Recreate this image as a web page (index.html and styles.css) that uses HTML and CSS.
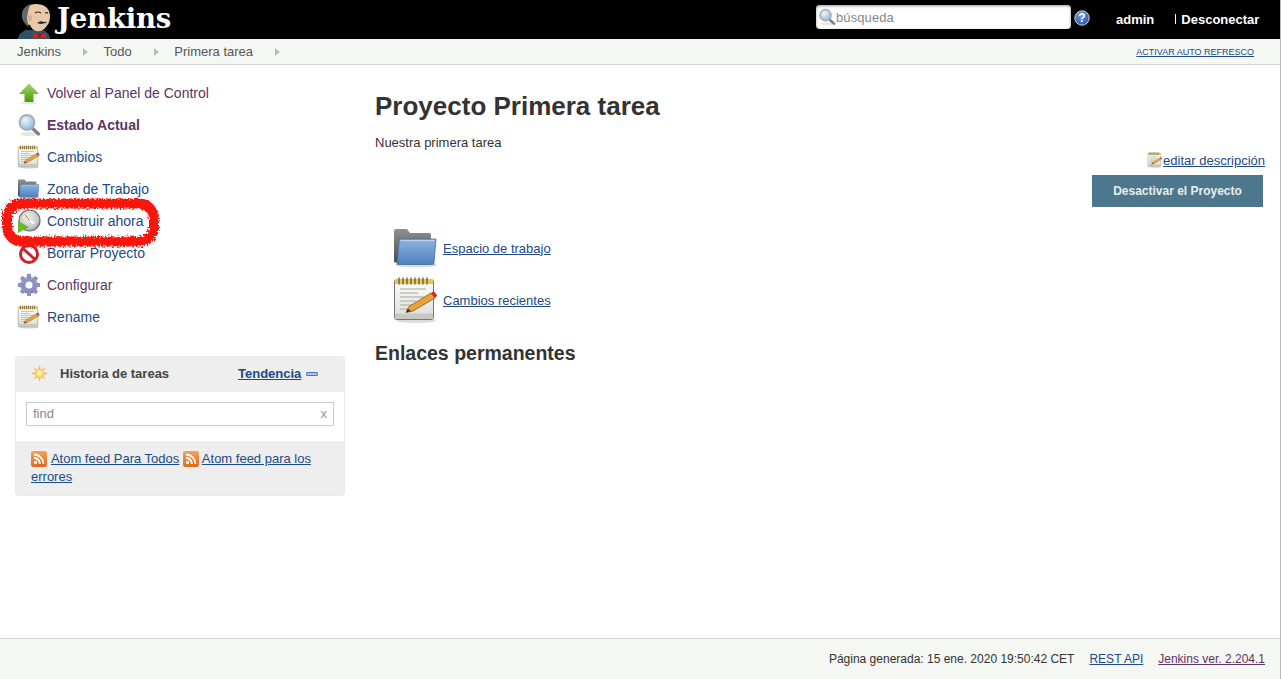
FILE: index.html
```html
<!DOCTYPE html>
<html lang="es">
<head>
<meta charset="utf-8">
<title>Primera tarea [Jenkins]</title>
<link rel="stylesheet" href="styles.css">
</head>
<body>
<svg class="defs" width="0" height="0" aria-hidden="true">
  <defs>
    <linearGradient id="gFolder" x1="0" y1="0" x2="0" y2="1"><stop offset="0" stop-color="#8fb4e0"/><stop offset="1" stop-color="#4f7fbe"/></linearGradient>
    <linearGradient id="gTab" x1="0" y1="0" x2="0" y2="1"><stop offset="0" stop-color="#909090"/><stop offset="1" stop-color="#4a4a4a"/></linearGradient>
    <linearGradient id="gPaper" x1="0" y1="0" x2="0" y2="1"><stop offset="0" stop-color="#fdfdfb"/><stop offset="1" stop-color="#dcdcd8"/></linearGradient>
    <linearGradient id="gArrow" x1="0" y1="0" x2="0" y2="1"><stop offset="0" stop-color="#a5d96a"/><stop offset="1" stop-color="#4e9a06"/></linearGradient>
    <linearGradient id="gGear" x1="0" y1="0" x2="0" y2="1"><stop offset="0" stop-color="#b4bade"/><stop offset="1" stop-color="#767eb0"/></linearGradient>
    <radialGradient id="gLens" cx=".4" cy=".35" r=".7"><stop offset="0" stop-color="#eef5fc"/><stop offset="1" stop-color="#8fb2d8"/></radialGradient>
    <radialGradient id="gHelp" cx=".4" cy=".3" r=".8"><stop offset="0" stop-color="#6f9fe0"/><stop offset="1" stop-color="#1f4f9a"/></radialGradient>
    <linearGradient id="gRss" x1="0" y1="0" x2="0" y2="1"><stop offset="0" stop-color="#f8a05a"/><stop offset="1" stop-color="#dd6a1a"/></linearGradient>
    <radialGradient id="gSun" cx=".5" cy=".45" r=".55"><stop offset="0" stop-color="#fff7c0"/><stop offset="1" stop-color="#f7cf55"/></radialGradient>
    <radialGradient id="gClock" cx=".45" cy=".4" r=".65"><stop offset="0" stop-color="#ecedef"/><stop offset=".7" stop-color="#c6c8cc"/><stop offset="1" stop-color="#85878c"/></radialGradient>
    <filter id="rough" x="-8%" y="-25%" width="116%" height="150%"><feTurbulence type="fractalNoise" baseFrequency=".55" numOctaves="2" seed="7"/><feDisplacementMap in="SourceGraphic" scale="7"/></filter>
    <symbol id="i-folder" viewBox="0 0 48 48">
      <ellipse cx="24" cy="41" rx="21" ry="2.500" fill="#000" opacity=".14"/>
      <path d="M2 7a2 2 0 0 1 2-2h11l3 4h19a2 2 0 0 1 2 2v6H7l-1 22-4-1z" fill="url(#gTab)"/>
      <path d="M7.500 15H44l-2 24a1.500 1.500 0 0 1-1.500 1.500H6a1 1 0 0 1-1-1z" fill="url(#gFolder)" stroke="#3f6cab" stroke-width=".8"/>
      <path d="M8.500 16.500H42.500" stroke="#bcd3ef" stroke-width="1"/>
    </symbol>
    <symbol id="i-note" viewBox="0 0 48 48">
      <ellipse cx="24" cy="44.500" rx="20" ry="2.500" fill="#000" opacity=".14"/>
      <rect x="2.500" y="3.500" width="39" height="40" rx="2" fill="url(#gPaper)" stroke="#77776f"/>
      <rect x="3" y="37.500" width="38" height="5.500" fill="#c8c8c4"/>
      <rect x="3" y="3" width="38" height="5" fill="#e7c65a"/>
      <path d="M7 2v6M11 2v6M15 2v6M19 2v6M23 2v6M27 2v6M31 2v6M35 2v6" stroke="#77622a" stroke-width="1.400" stroke-linecap="round"/>
      <path d="M8 13h26M8 17h18M8 21h24M8 25h16M8 29h14M8 33h12" stroke="#a8a8a0" stroke-width="1.200"/>
      <path d="M14 36.500l3-6L39 17l4 5-22 13z" fill="#e5a33c" stroke="#8a5a14" stroke-width=".8"/>
      <path d="M14 36.500l1.800-3.700 3 2.300z" fill="#3a2a14"/>
      <path d="M39 17l3-1.800 3.200 4.300-2.200 2.500z" fill="#d9232a"/>
    </symbol>
    <symbol id="i-search" viewBox="0 0 24 24">
      <ellipse cx="12" cy="21" rx="9" ry="2" fill="#000" opacity=".1"/>
      <path d="M15 15l6.500 6" stroke="#7c8088" stroke-width="3.200" stroke-linecap="round"/>
      <circle cx="10" cy="9.500" r="7.500" fill="url(#gLens)" stroke="#a8acb0" stroke-width="1.800"/>
    </symbol>
  </defs>
</svg>

<div class="page">
  <header class="topbar">
    <a class="brand">
      <svg class="butler" viewBox="0 0 35 39" aria-hidden="true">
        <path d="M0 39c0-4 3-7 8-9h17c4 2 7 5 7 9z" fill="#2f5066"/>
        <path d="M8 12c0-5 4-8 10-8 8 0 14 4 14 12 0 4-1 8-4 11-2 3-6 5-10 4-3-1-5-3-6-6-3 0-4-3-4-5z" fill="#e9c8aa"/>
        <path d="M11 27C6 24 3 19 4 13 5 8 9 5 13 4c-2 3-3 6-3 8l-1 5c0 4 1 7 2 10z" fill="#62666a"/>
        <ellipse cx="12" cy="18" rx="2" ry="3" fill="#d8ae90"/>
        <path d="M17 13q3-2 6 0M27 13q2-1 3 .5" stroke="#3a2a20" stroke-width="1.100" fill="none"/>
        <path d="M19 23q4-3 6-1 2-1 4 1-4 0-5 1-3 0-5-1z" fill="#2e2a28"/>
        <path d="M15 33l6.500 2 6.500-2v6l-6.500-2-6.500 2z" fill="#d42027"/>
        <rect x="20" y="34" width="3" height="3" fill="#a01418"/>
      </svg>
      <span class="wordmark">Jenkins</span>
    </a>
    <div class="search">
      <svg class="search-icon"><use href="#i-search"/></svg>
      <span class="search-ph">búsqueda</span>
    </div>
    <svg class="help" viewBox="0 0 16 16" aria-hidden="true">
      <circle cx="8" cy="8" r="7.200" fill="url(#gHelp)" stroke="#dfe8f5" stroke-width=".9"/>
      <text x="8" y="12" text-anchor="middle" class="help-q">?</text>
    </svg>
    <span class="user">admin</span>
    <span class="logout">Desconectar</span>
  </header>

  <nav class="crumbs">
    <span>Jenkins</span><i class="tri"></i>
    <span>Todo</span><i class="tri"></i>
    <span>Primera tarea</span><i class="tri"></i>
    <a class="refresh">ACTIVAR AUTO REFRESCO</a>
  </nav>

  <div class="content">
    <aside class="side">
      <ul class="tasks">
        <li class="visited">
          <svg class="ti" viewBox="0 0 24 24"><ellipse cx="12" cy="22" rx="8" ry="1.500" fill="#000" opacity=".1"/><path d="M12 2.500L22 13h-5.500v8h-9v-8H2z" fill="url(#gArrow)"/></svg>
          Volver al Panel de Control
        </li>
        <li class="visited current">
          <svg class="ti"><use href="#i-search"/></svg>
          Estado Actual
        </li>
        <li>
          <svg class="ti"><use href="#i-note"/></svg>
          Cambios
        </li>
        <li>
          <svg class="ti"><use href="#i-folder"/></svg>
          Zona de Trabajo
        </li>
        <li>
          <svg class="ti" viewBox="0 0 24 24">
            <circle cx="12.500" cy="11.500" r="10.500" fill="url(#gClock)" stroke="#6f7176" stroke-width="1.200"/>
            <path d="M12.500 11.500V3.500A8 8 0 0 0 5 8.500z" fill="#f3e6ae"/>
            <path d="M12.500 11.500L8 5.500M12.500 11.500l5 3" stroke="#fff" stroke-width="1.600"/>
            <path d="M12.500 11.500L8 5.500" stroke="#444" stroke-width=".7"/>
            <path d="M1 12l11 6-11 6z" fill="#66bb22"/>
          </svg>
          Construir ahora
        </li>
        <li>
          <svg class="ti" viewBox="0 0 24 24"><circle cx="12" cy="13" r="8.500" fill="#fff" stroke="#c8242a" stroke-width="3"/><path d="M6 7.500l12 11" stroke="#c8242a" stroke-width="3"/></svg>
          Borrar Proyecto
        </li>
        <li class="visited">
          <svg class="ti" viewBox="0 0 24 24"><circle cx="12" cy="12" r="8.800" fill="url(#gGear)"/><path d="M12 1v22M1 12h22M4.200 4.200l15.600 15.600M19.800 4.200L4.200 19.800" stroke="#8b92c2" stroke-width="4"/><circle cx="12" cy="12" r="3.600" fill="#fff"/></svg>
          Configurar
        </li>
        <li>
          <svg class="ti"><use href="#i-note"/></svg>
          Rename
        </li>
      </ul>

      <section class="widget">
        <div class="w-head">
          <svg class="sun" viewBox="0 0 16 16"><path d="M8 0v16M0 8h16M2.300 2.300l11.400 11.400M13.700 2.300L2.300 13.700" stroke="#f5b860" stroke-width="1.400"/><circle cx="8" cy="8" r="4.800" fill="url(#gSun)" stroke="#eeb04a" stroke-width=".6"/></svg>
          <span class="w-title">Historia de tareas</span>
          <a class="w-trend">Tendencia</a>
          <span class="w-min"></span>
        </div>
        <div class="w-body">
          <div class="find"><span>find</span><span class="find-x">x</span></div>
        </div>
        <div class="w-foot">
          <svg class="rss rss-first" viewBox="0 0 16 16"><rect width="16" height="16" rx="2.500" fill="url(#gRss)"/><circle cx="4.500" cy="11.500" r="1.700" fill="#fff"/><path d="M3 7a6 6 0 0 1 6 6M3 3.500A9.500 9.500 0 0 1 12.500 13" stroke="#fff" stroke-width="1.800" fill="none"/></svg>
          <a>Atom feed Para Todos</a>
          <svg class="rss" viewBox="0 0 16 16"><rect width="16" height="16" rx="2.500" fill="url(#gRss)"/><circle cx="4.500" cy="11.500" r="1.700" fill="#fff"/><path d="M3 7a6 6 0 0 1 6 6M3 3.500A9.500 9.500 0 0 1 12.500 13" stroke="#fff" stroke-width="1.800" fill="none"/></svg>
          <a>Atom feed para los errores</a>
        </div>
      </section>

      <svg class="scribble" viewBox="0 0 160 56" aria-hidden="true">
        <rect x="7" y="5.500" width="147" height="38" rx="15" fill="none" stroke="#f8120c" stroke-width="10" filter="url(#rough)"/>
      </svg>
    </aside>

    <main class="main">
      <h1>Proyecto Primera tarea</h1>
      <p class="desc">Nuestra primera tarea</p>
      <div class="edit">
        <svg class="edit-i"><use href="#i-note"/></svg><a>editar descripción</a>
      </div>
      <div class="actions"><button class="disable">Desactivar el Proyecto</button></div>
      <div class="links">
        <div class="link-row"><svg class="li"><use href="#i-folder"/></svg><a>Espacio de trabajo</a></div>
        <div class="link-row"><svg class="li"><use href="#i-note"/></svg><a>Cambios recientes</a></div>
      </div>
      <h2>Enlaces permanentes</h2>
    </main>
  </div>

  <footer class="foot">
    <span>Página generada: 15 ene. 2020 19:50:42 CET</span>
    <a>REST API</a>
    <a class="ver">Jenkins ver. 2.204.1</a>
  </footer>
</div>
</body>
</html>
```

FILE: styles.css
```css
* { box-sizing: border-box; }
html, body { margin: 0; height: 679px; overflow: hidden; background: #fff; }
body { font-family: "Liberation Sans", Arial, sans-serif; font-size: 13px; color: #333; }
a { color: #204a87; text-decoration: underline; }
.defs { position: absolute; }
.page { width: 1281px; height: 679px; display: flex; flex-direction: column; border-right: 1px solid #bbb; }

.topbar { height: 39px; flex: none; background: #000; color: #fff; display: flex; align-items: flex-start; position: relative; }
.brand { display: flex; align-items: flex-start; margin-left: 18px; width: 798px; text-decoration: none; }
.butler { width: 35px; height: 39px; display: block; }
.wordmark { font-family: "DejaVu Serif", "Liberation Serif", serif; font-weight: 700; font-size: 27.5px; line-height: 37px; color: #fff; margin-left: 4px; letter-spacing: -.2px; }
.search { width: 255px; height: 24px; margin-top: 5px; background: #fff; border-radius: 4px; display: flex; align-items: center; padding-left: 2px; box-shadow: inset 0 1px 3px #999; }
.search-icon { width: 18px; height: 18px; }
.search-ph { color: #888; font-size: 13px; letter-spacing: .1px; }
.help { width: 16px; height: 16px; margin: 10px 0 0 3px; }
.help-q { font: 700 12px "Liberation Sans", sans-serif; fill: #fff; }
.user { font-weight: 700; font-size: 13px; margin: 12px 0 0 26px; line-height: 15px; }
.logout { font-weight: 700; font-size: 13px; margin: 12px 0 0 21px; padding-left: 6px; line-height: 15px; background: linear-gradient(#fff, #fff) left 2px / 1px 10px no-repeat; }

.crumbs { height: 26px; flex: none; background: #f5f7f2; border-bottom: 1px solid #d3d7cf; padding: 0 26px 0 17px; display: flex; align-items: center; font-size: 13px; color: #555; }
.tri { width: 0; height: 0; border-left: 5px solid #bbb; border-top: 4px solid transparent; border-bottom: 4px solid transparent; margin: 0 15.5px 0 22px; }
.refresh { margin-left: auto; font-size: 9px; }

.content { flex: 1; display: flex; min-height: 0; }
.side { width: 375px; flex: none; padding: 12px 0 0 15px; position: relative; }
.tasks { list-style: none; margin: 0; padding: 0; }
.tasks li { height: 32px; display: flex; align-items: center; gap: 6px; padding-left: 2px; font-size: 14px; color: #204a87; }
.tasks li.visited { color: #5c3566; }
.tasks li.current { font-weight: 700; }
.ti { width: 24px; height: 24px; flex: none; display: block; }

.widget { width: 330px; margin-top: 23px; background: #eee; border: 1px solid #e9e9e9; border-radius: 4px; overflow: hidden; }
.w-head { height: 35px; display: flex; align-items: center; padding: 0 0 2px 16px; }
.sun { width: 15px; height: 15px; }
.w-title { font-weight: 700; color: #444; margin-left: 13px; width: 178px; }
.w-trend { font-weight: 700; }
.w-min { width: 12px; height: 4px; margin-left: 5px; background: #a9c4e6; border: 1px solid #4a78b5; border-radius: 1px; }
.w-body { height: 49px; background: #fff; padding: 10px; }
.find { height: 24px; border: 1px solid #ccc; display: flex; align-items: center; justify-content: space-between; padding: 0 6px 2px; color: #888; font-size: 13px; }
.find-x { font-size: 13px; color: #999; }
.w-foot { padding: 9px 15px; line-height: 18px; font-size: 13px; }
.rss { width: 16px; height: 16px; vertical-align: -4px; }
.rss-first { margin-right: 1px; }

.scribble { position: absolute; left: 0; top: 133px; width: 160px; height: 56px; pointer-events: none; }

.main { flex: 1; padding: 0 15px 0 0; min-width: 0; }
h1 { font-size: 26px; line-height: 28px; margin: 27px 0 0; color: #333; }
.desc { margin: 15px 0 0; font-size: 13px; line-height: 15px; }
.edit { display: flex; justify-content: flex-end; align-items: center; margin-top: 2px; height: 16px; }
.edit-i { width: 16px; height: 16px; }
.actions { display: flex; justify-content: flex-end; padding-right: 2px; margin-top: 7px; }
.disable { width: 171px; height: 32px; border: 0; background: #4d778c; color: #e9edef; font: 700 12px "Liberation Sans", sans-serif; padding: 0; }
.links { padding-left: 17px; margin-top: 15px; }
.link-row { height: 52px; display: flex; align-items: center; gap: 3px; }
.li { width: 48px; height: 48px; flex: none; }
h2 { font-size: 19.5px; line-height: 22px; margin: 16px 0 0; color: #333; }

.foot { height: 41px; flex: none; background: #f5f7f2; border-top: 1px solid #d3d7cf; display: flex; justify-content: flex-end; align-items: center; gap: 15px; padding-right: 15px; font-size: 12px; }
.foot .ver { color: #5c3566; }
```
